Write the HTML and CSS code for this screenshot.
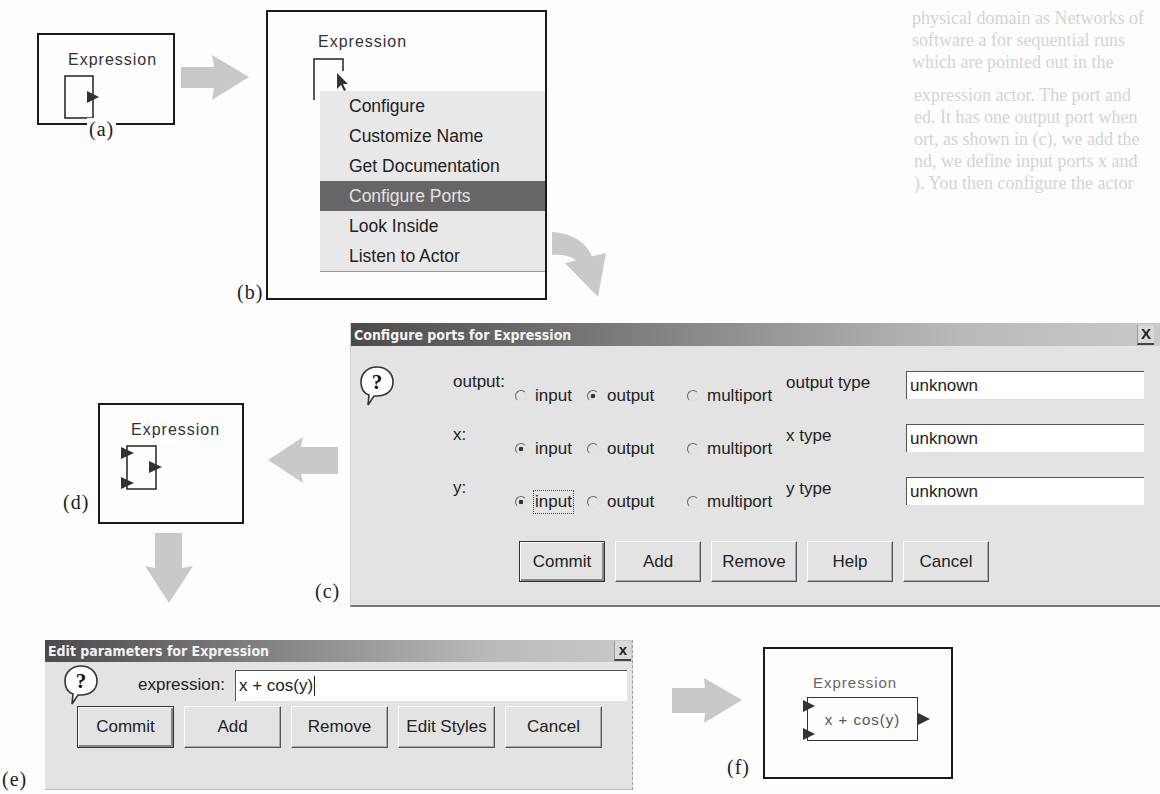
FILE: index.html
```
<!DOCTYPE html>
<html lang="en">
<head>
  <meta charset="UTF-8" />
  <title>Configuring an Expression actor</title>
  <link rel="stylesheet" href="styles.css">
</head>
<body>
<div class="figure">

  <!-- text from the other side of the page -->
  <div class="showthrough top-lines">
    <p>physical domain as Networks of</p>
    <p>software a for sequential runs</p>
    <p>which are pointed out in the</p>
  </div>
  <div class="showthrough mid-lines">
    <p>expression actor. The port and</p>
    <p>ed. It has one output port when</p>
    <p>ort, as shown in (c), we add the</p>
    <p>nd, we define input ports x and</p>
    <p>). You then configure the actor</p>
  </div>

  <!-- (a) -->
  <div class="actor actor-a">
    <div class="actor-name">Expression</div>
    <svg class="icon-a" width="36" height="45" viewBox="0 0 36 45">
      <rect x="1" y="1" width="28" height="42" fill="none" stroke="#222" stroke-width="1.5"/>
      <polygon points="23,16 35,22 23,28" fill="#333"/>
    </svg>
  </div>
  <span class="tag tag-a">(a)</span>

  <svg class="arrow arrow-ab" width="68" height="45" viewBox="0 0 68 45">
    <polygon points="0,12 33,12 31,0 68,22 31,45 33,33 0,33" />
  </svg>

  <!-- (b) -->
  <div class="actor actor-b">
    <div class="actor-name">Expression</div>
    <svg class="icon-b" width="40" height="33" viewBox="0 0 40 33">
      <path d="M1 42 L1 1 L30 1 L30 13" fill="none" stroke="#222" stroke-width="1.5"/>
      <polygon points="24,15 24,31 28,27 31,33 33,32 30,26 35,26" fill="#333"/>
    </svg>
    <ul class="menu">
      <li>Configure</li>
      <li>Customize Name</li>
      <li>Get Documentation</li>
      <li class="active">Configure Ports</li>
      <li>Look Inside</li>
      <li>Listen to Actor</li>
    </ul>
  </div>
  <span class="tag tag-b">(b)</span>

  <svg class="arrow arrow-bc" width="56" height="66" viewBox="0 0 56 66">
    <path d="M0 0 Q30 2 40 24.3 L54 21 L46 65 L13 31 L24 28.4 Q16 22 0 23 Z" />
  </svg>

  <!-- (c) -->
  <div class="dialog dialog-ports">
    <div class="titlebar">
      <span class="title">Configure ports for Expression</span>
      <span class="close">X</span>
    </div>
    <div class="port-grid">
      <svg class="help" width="38" height="42" viewBox="0 0 38 42">
        <path d="M19 2 C28 2 35 8 35 17 C35 26 28 31 19 31 L16 31 L10 40 L11 30 C5 28 3 23 3 17 C3 8 10 2 19 2 Z" fill="#fff" stroke="#333" stroke-width="1.6"/>
        <text x="19" y="24" text-anchor="middle">?</text>
      </svg>

      <span class="port-name">output:</span>
      <div class="radios">
        <label class="opt"><span class="radio"></span>input</label>
        <label class="opt"><span class="radio on"></span>output</label>
        <label class="opt"><span class="radio"></span>multiport</label>
      </div>
      <span class="type-name">output type</span>
      <span class="field">unknown</span>

      <span class="port-name">x:</span>
      <div class="radios">
        <label class="opt"><span class="radio on"></span>input</label>
        <label class="opt"><span class="radio"></span>output</label>
        <label class="opt"><span class="radio"></span>multiport</label>
      </div>
      <span class="type-name">x type</span>
      <span class="field">unknown</span>

      <span class="port-name">y:</span>
      <div class="radios">
        <label class="opt"><span class="radio on"></span><span class="focus">input</span></label>
        <label class="opt"><span class="radio"></span>output</label>
        <label class="opt"><span class="radio"></span>multiport</label>
      </div>
      <span class="type-name">y type</span>
      <span class="field">unknown</span>
    </div>
    <div class="buttons buttons-ports">
      <button class="default">Commit</button>
      <button>Add</button>
      <button>Remove</button>
      <button>Help</button>
      <button>Cancel</button>
    </div>
  </div>
  <span class="tag tag-c">(c)</span>

  <svg class="arrow arrow-cd" width="70" height="46" viewBox="0 0 70 46">
    <polygon points="70,10 33,10 35,0 0,23 35,46 33,37 70,37" />
  </svg>

  <!-- (d) -->
  <div class="actor actor-d">
    <div class="actor-name">Expression</div>
    <svg class="icon-d" width="44" height="48" viewBox="0 0 44 48">
      <rect x="7" y="2" width="29" height="43" fill="none" stroke="#222" stroke-width="1.5"/>
      <polygon points="1,3 14,9 1,15" fill="#333"/>
      <polygon points="1,33 14,39 1,45" fill="#333"/>
      <polygon points="29,17 42,23 29,29" fill="#333"/>
    </svg>
  </div>
  <span class="tag tag-d">(d)</span>

  <svg class="arrow arrow-de" width="48" height="70" viewBox="0 0 48 70">
    <polygon points="10,0 37,0 37,35 48,33 24,70 0,33 10,35" />
  </svg>

  <!-- (e) -->
  <div class="dialog dialog-params">
    <div class="titlebar">
      <span class="title">Edit parameters for Expression</span>
      <span class="close small">x</span>
    </div>
    <div class="param-row">
      <svg class="help" width="38" height="42" viewBox="0 0 38 42">
        <path d="M19 2 C28 2 35 8 35 17 C35 26 28 31 19 31 L16 31 L10 40 L11 30 C5 28 3 23 3 17 C3 8 10 2 19 2 Z" fill="#fff" stroke="#333" stroke-width="1.6"/>
        <text x="19" y="24" text-anchor="middle">?</text>
      </svg>
      <span class="param-name">expression:</span>
      <span class="field wide">x + cos(y)<span class="caret"></span></span>
    </div>
    <div class="buttons buttons-params">
      <button class="default">Commit</button>
      <button>Add</button>
      <button>Remove</button>
      <button>Edit Styles</button>
      <button>Cancel</button>
    </div>
  </div>
  <span class="tag tag-e">(e)</span>

  <svg class="arrow arrow-ef" width="70" height="45" viewBox="0 0 70 45">
    <polygon points="0,10 33,10 32,0 70,22 32,45 33,35 0,35" />
  </svg>

  <!-- (f) -->
  <div class="actor actor-f">
    <div class="actor-name light">Expression</div>
    <div class="expr-box">
      x + cos(y)
      <span class="port in1"></span>
      <span class="port in2"></span>
      <span class="port out"></span>
    </div>
  </div>
  <span class="tag tag-f">(f)</span>

</div>
</body>
</html>
```

FILE: styles.css
```
body { margin: 0; width: 1160px; height: 794px; overflow: hidden; background: #fdfdfd; font-family: "Liberation Sans", Arial, sans-serif; color: #222; }
.figure { position: relative; width: 1160px; height: 794px; overflow: hidden; }

/* faint print from the back of the page */
.showthrough { position: absolute; font-family: "Liberation Serif", serif; font-size: 18px; color: #d4d4d4; white-space: nowrap; }
.showthrough p { margin: 0; line-height: 22px; }
.top-lines { left: 912px; top: 7px; }
.mid-lines { left: 914px; top: 84px; }

/* actor boxes */
.actor { position: absolute; box-sizing: border-box; border: 2px solid #1a1a1a; background: #fdfdfd; display: flex; flex-direction: column; align-items: flex-start; overflow: hidden; }
.actor-name { font-size: 16px; line-height: 18px; letter-spacing: 1px; color: #333; }
.actor-name.light { color: #666; font-size: 15px; }

.actor-a { left: 37px; top: 33px; width: 138px; height: 92px; padding: 16px 0 0 29px; }
.icon-a { margin: 6px 0 0 -4px; }

.actor-b { left: 266px; top: 10px; width: 281px; height: 290px; padding-top: 21px; }
.actor-b .actor-name { margin-left: 50px; }
.icon-b { margin: 7px 0 0 45px; overflow: visible; }
.menu { list-style: none; margin: 0 0 0 52px; padding: 0; align-self: stretch; background: #e8e8e8; border-bottom: 1px solid #999; font-size: 17.5px; color: #222; }
.menu li { height: 30px; line-height: 30px; padding-left: 29px; white-space: nowrap; }
.menu li.active { background: #666; color: #e2e2e2; }

.actor-d { left: 98px; top: 403px; width: 146px; height: 121px; padding-top: 16px; }
.actor-d .actor-name { margin-left: 31px; }
.icon-d { margin: 5px 0 0 20px; }

.actor-f { left: 763px; top: 647px; width: 190px; height: 132px; padding-top: 25px; }
.actor-f .actor-name { margin-left: 48px; }
.expr-box { position: relative; box-sizing: border-box; margin: 5px 0 0 42px; width: 111px; height: 44px; border: 1.5px solid #333; font-size: 15px; letter-spacing: 1px; color: #555; display: flex; align-items: center; justify-content: center; }
.port { position: absolute; width: 0; height: 0; border-top: 6px solid transparent; border-bottom: 6px solid transparent; border-left: 12px solid #333; }
.port.in1 { left: -5px; top: 2px; }
.port.in2 { left: -5px; top: 30px; }
.port.out { left: 110px; top: 15px; }

/* figure labels */
.tag { position: absolute; font-family: "Liberation Serif", serif; font-size: 20px; letter-spacing: 1px; color: #222; line-height: 22px; }
.tag-a { left: 87px; top: 118px; background: #fdfdfd; padding: 0 2px; }
.tag-b { left: 237px; top: 281px; }
.tag-c { left: 315px; top: 580px; }
.tag-d { left: 63px; top: 491px; }
.tag-e { left: 2px; top: 768px; }
.tag-f { left: 727px; top: 756px; }

/* grey block arrows */
.arrow { position: absolute; fill: #c9c9c9; }
.arrow-ab { left: 181px; top: 55px; }
.arrow-bc { left: 552px; top: 232px; }
.arrow-cd { left: 268px; top: 437px; }
.arrow-de { left: 145px; top: 533px; }
.arrow-ef { left: 672px; top: 678px; }

/* dialogs */
.dialog { position: absolute; box-sizing: border-box; background: #e3e3e3; display: flex; flex-direction: column; }
.titlebar { height: 23px; display: flex; align-items: center; justify-content: space-between; background: linear-gradient(90deg, #4b4b4b 0%, #7e7e7e 35%, #b9b9b9 75%, #c9c9c9 100%); }
.title { padding-left: 3px; font-family: "DejaVu Sans Condensed", "DejaVu Sans", sans-serif; font-stretch: condensed; font-weight: bold; font-size: 14px; color: #f2f2f2; }
.close { margin-right: 8px; width: 16px; height: 18px; line-height: 18px; text-align: center; font-weight: bold; font-size: 15px; color: #222; background: #d9d9d9; border-left: 1px solid #999; border-bottom: 2px solid #444; }
.close.small { margin-right: 1px; }

.help text { font-family: "Liberation Serif", serif; font-weight: bold; font-size: 21px; fill: #111; }

.field { box-sizing: border-box; display: flex; align-items: center; padding-left: 3px; background: #fff; border-top: 1px solid #555; border-left: 1px solid #555; font-size: 17px; color: #222; }

.dialog-ports { left: 350px; top: 323px; width: 812px; height: 284px; border-bottom: 2px solid #777; border-left: 1px solid #cfcfcf; }
.port-grid { display: grid; grid-template-columns: 102px 62px 271px 120px 238px; grid-auto-rows: 53px; padding-top: 22px; font-size: 17px; }
.port-grid .help { grid-row: 1; grid-column: 1; margin: -3px 0 0 7px; }
.port-name { grid-column: 2; padding-top: 4px; }
.type-name { padding-top: 5px; }
.port-grid .field { margin-top: 3px; height: 28px; }
.radios { display: flex; align-self: end; padding-bottom: 15px; }
.opt { display: flex; align-items: center; gap: 8px; }
.opt:nth-child(1) { width: 72px; }
.opt:nth-child(2) { width: 100px; }
.radio { width: 10px; height: 10px; border-radius: 50%; border: 1px solid; border-color: #666 #ddd #ddd #666; }
.radio.on { background: radial-gradient(circle, #333 0 2px, transparent 2.6px); }
.focus { outline: 1px dotted #444; outline-offset: 1px; }

.buttons { display: flex; gap: 10px; }
.buttons button { box-sizing: border-box; height: 41px; font-family: "Liberation Sans", Arial, sans-serif; font-size: 17px; color: #222; background: #e3e3e3; border: 1px solid; border-color: #fafafa #555 #555 #fafafa; box-shadow: inset -1px -1px #aaa; padding: 0; }
.buttons button.default { border: 1px solid #333; box-shadow: inset 1px 1px #fafafa, inset -2px -2px #888; }
.buttons-ports { margin: 14px 0 0 168px; }
.buttons-ports button { width: 86px; }

.dialog-params { left: 45px; top: 640px; width: 588px; height: 150px; border-right: 1px dashed #9a9a9a; border-bottom: 1px solid #bbb; }
.dialog-params .titlebar { height: 22px; }
.param-row { display: grid; grid-template-columns: 93px 97px 392px; height: 31px; margin-top: 2px; align-items: center; }
.param-row .help { margin: 0 0 0 17px; align-self: start; }
.param-name { font-size: 17px; }
.field.wide { height: 31px; }
.caret { width: 1px; height: 20px; background: #222; margin-left: 1px; }
.buttons-params { margin: 11px 0 0 32px; }
.buttons-params button { width: 97px; height: 42px; }
```
